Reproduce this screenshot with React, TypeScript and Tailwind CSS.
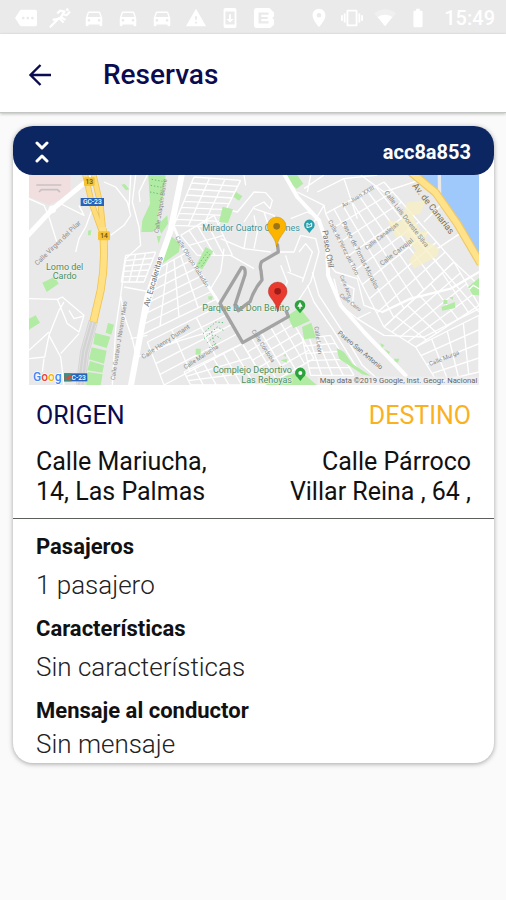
import React from "react";
import {
  MdBatteryFull,
  MdDirectionsCar,
  MdLocationOn,
  MdMore,
  MdSystemUpdate,
  MdVibration,
  MdWarning,
} from "react-icons/md";

type Point = [number, number];

const mix = (a: Point, b: Point, t: number): Point => [
  Math.round(a[0] + (b[0] - a[0]) * t),
  Math.round(a[1] + (b[1] - a[1]) * t),
];

// Street grid stretched over a four-cornered block of the city.
function streets(a: Point, b: Point, c: Point, d: Point, across: number, down: number) {
  const parts: string[] = [];
  for (let i = 0; i <= across; i++) {
    parts.push(`M${mix(a, b, i / across)}L${mix(d, c, i / across)}`);
  }
  for (let i = 0; i <= down; i++) {
    parts.push(`M${mix(a, d, i / down)}L${mix(b, c, i / down)}`);
  }
  return parts.join("");
}

interface StreetLabelProps {
  x: number;
  y: number;
  angle: number;
  size?: number;
  color?: string;
  children: string;
}

function StreetLabel({ x, y, angle, size = 20, color = "#8a8a8a", children }: StreetLabelProps) {
  return (
    <text transform={`translate(${x} ${y}) rotate(${angle})`} fontSize={size} fill={color}>
      {children}
    </text>
  );
}

function Pin({ x, y, fill, dot }: { x: number; y: number; fill: string; dot: string }) {
  return (
    <g transform={`translate(${x} ${y})`}>
      <path
        d="M0 0C-4 -20 -10 -28 -18 -39C-25 -48 -28 -54 -28 -62A28 28 0 0 1 28 -62C28 -54 25 -48 18 -39C10 -28 4 -20 0 0Z"
        fill={fill}
        stroke={dot}
        strokeWidth="1"
      />
      <circle cy="-62" r="10" fill={dot} />
    </g>
  );
}

function PlacePin({ x, y, fill, children }: { x: number; y: number; fill: string; children: React.ReactNode }) {
  return (
    <g transform={`translate(${x} ${y})`}>
      <path d="M0 23L-9 12A16 16 0 1 1 9 12Z" fill={fill} />
      {children}
    </g>
  );
}

function RouteMap() {
  return (
    <svg viewBox="15 9 1350 630" className="block w-full" role="img" aria-label="Mapa de la ruta" fontFamily="Roboto, sans-serif">
      <rect x="15" y="9" width="1350" height="630" fill="#e9e9e9" />
      <path d="M15 9H140V70L75 98L15 75Z" fill="#f1dfe0" />

      {/* Minor streets */}
      <g fill="none" stroke="#fff" strokeWidth="4" strokeLinejoin="round">
        <path d={streets([510, 15], [650, 25], [580, 165], [450, 160], 3, 8)} />
        <path d={streets([470, 190], [570, 130], [625, 250], [520, 250], 4, 2)} />
        <path d={streets([410, 285], [490, 240], [580, 380], [350, 490], 4, 6)} />
        <path d={streets([305, 250], [395, 240], [360, 330], [292, 330], 3, 5)} />
        <path d={streets([370, 510], [590, 400], [655, 515], [420, 639], 3, 4)} />
        <path d={streets([655, 515], [795, 430], [870, 560], [730, 639], 5, 5)} />
        <path d={streets([480, 600], [655, 515], [730, 639], [500, 639], 6, 3)} />
        <path d={streets([835, 500], [920, 490], [990, 610], [860, 610], 4, 5)} />
        <path d={streets([905, 125], [1080, 30], [1290, 270], [1080, 465], 7, 8)} />
        <path d={streets([1080, 465], [1290, 270], [1365, 400], [1175, 525], 6, 4)} />
        <path d={streets([1175, 525], [1365, 430], [1365, 600], [1240, 630], 4, 4)} />
        <path d="M15 80L60 100L75 135L100 215M100 90L180 130L165 100M205 110L185 165L165 200L155 240M240 30L275 45L310 90L320 130L300 160L260 190M320 9L315 110M335 9L325 90L345 165L350 220L305 260L290 370M370 9L345 60L348 90" />
        <path d="M15 380L100 382L115 375L180 430L165 480L130 455L100 382M120 390L105 415L75 490L110 555L120 639M75 480L15 535M75 490L62 555L15 560M165 485L110 545M60 560L55 600M180 432L150 440L135 415" />
        <path d="M290 370L300 430L325 500L340 570M290 370L275 470L265 639M300 345L380 360M320 500L370 490M330 560L400 530L470 505L590 470" />
        <path d="M600 110L640 120L690 60L725 62L745 85L738 110L720 90L690 105L660 150M640 160L670 170L660 230M665 40L660 9M690 130L700 180L690 230M690 110L750 130L760 180M720 120L740 180M590 200L660 230L740 240M600 230L590 300L560 350M620 250L690 290" />
        <path d="M765 240L810 240L830 190L875 200L885 240L860 330L820 390M825 240L845 215L865 240L835 330M790 300L840 320M770 280L790 330L760 390M785 250L800 300M800 140L850 120L870 130M820 60L900 100L870 150M840 50L900 9M880 60L960 20L1060 9M900 100L905 125M860 9L850 60M960 20L1000 140M1010 9L1080 60L1200 20" />
        <path d="M865 300L885 370L950 470L1015 580L1060 620M850 340L870 390L925 470L1000 590M905 265L935 300L1000 320L1020 400L1075 420M930 320L950 400L1000 440L1040 420M950 330L990 350L985 400M1000 440L1080 490L1200 495L1365 410" />
        <path d="M1150 170L1365 420M1290 270L1365 340M1200 150L1280 70M1240 230L1330 170" />
      </g>

      {/* Shopping blocks */}
      <path
        d="M1150 90L1205 85L1190 125L1165 130L1190 180L1210 175L1205 205L1245 230L1240 252L1170 290L1155 265L1175 235L1140 190L1115 195L1090 145L1130 150Z"
        fill="#f6efc6"
        opacity=".8"
      />

      {/* Parks */}
      <g fill="#b2eba3">
        <path d="M373 9H425L418 70L402 125L405 165L385 180L352 180L355 145L378 95Z" />
        <path d="M400 160L430 130L432 155L412 185Z" />
        <path d="M437 188L468 215L465 240L415 275Z" />
        <path d="M545 225L568 238L535 292L514 285Z" />
        <path d="M596 104L627 112L612 153L585 150Z" />
        <path d="M636 60L655 73L645 86L628 74Z" />
        <path d="M55 332L92 314L104 335L68 360Z" />
        <path d="M15 440L35 430L48 452L15 473Z" />
        <path d="M252 453L270 458L262 488L245 482Z" />
        <path d="M213 483L259 494L248 528L208 516Z" />
        <path d="M203 526L248 536L240 575L195 562Z" />
        <path d="M198 567L240 580L235 602L190 595Z" />
        <path d="M192 600L236 607L230 639H186Z" />
        <path d="M292 38L302 36L316 52L306 55Z" />
        <path d="M192 176L202 174L200 190L192 190Z" />
        <path d="M398 192L411 192L404 216Z" />
        <path d="M553 373L566 373L563 384L553 382Z" />
        <path d="M515 530L530 530L530 548L515 548Z" />
        <path d="M788 9H820L838 35L818 50L800 35Z" />
        <path d="M790 432L826 407L858 446L808 469Z" />
        <path d="M834 465L862 452L876 498L840 502Z" />
        <path d="M725 639L740 628L830 598L878 639Z" />
        <path d="M938 528L960 540L985 575L1040 612L1015 607L945 560Z" />
        <path d="M1252 405L1293 390L1294 408L1255 416Z" />
        <path d="M1258 384L1270 384L1270 396L1258 396ZM1276 376L1288 374L1286 384Z" />
        <path d="M1332 345L1365 318V370L1345 368Z" />
        <path d="M1068 513L1082 520L1074 527ZM1080 530L1098 540L1094 546ZM1110 560L1126 560L1122 572L1112 568Z" />
        <path d="M778 550L786 545L785 555ZM770 565L790 560L788 572Z" />
      </g>
      <path d="M1336 352L1348 340L1365 350" stroke="#fff" strokeWidth="4" fill="none" />
      <g stroke="#63bd7b" strokeWidth="3" strokeDasharray="4 6" fill="none">
        <path d="M383 22L415 28M380 40L412 46M378 60L408 66M525 275L553 237M533 283L560 243" />
        <path d="M537 485L575 450L598 452M540 500L580 465L598 475M550 512L575 490L590 500M556 527L580 512M562 478L572 520" />
      </g>

      {/* Coast */}
      <path d="M1170 9H1365V275L1320 190L1290 130L1230 55Z" fill="#9ec9fa" />
      <path d="M1246 9L1247 75" stroke="#e9e9e9" strokeWidth="10" />

      {/* Main avenues */}
      <g fill="none" stroke="#fff" strokeLinecap="round" strokeLinejoin="round">
        <path d="M10 192L85 112L215 5" strokeWidth="15" />
        <circle cx="85" cy="112" r="8" strokeWidth="7" />
        <path d="M475 0L440 175L370 375L320 645" strokeWidth="18" />
        <path d="M450 165L475 225L590 400" strokeWidth="8" />
        <path d="M780 5L820 75L885 145L910 220L912 310L950 400L1020 480L1145 610" strokeWidth="12" />
        <path d="M1075 420L1160 380L1280 350L1365 300" strokeWidth="7" />
      </g>

      {/* Motorways */}
      <g fill="none" strokeLinejoin="round">
        <path d="M208 448L182 540L170 640" stroke="#d3d3d3" strokeWidth="28" />
        <path d="M208 448L182 540L170 640M218 452L192 542L180 640M198 446L172 538L160 640" stroke="#e9e9e9" strokeWidth="2" />
        <path d="M183 5L205 100L232 175M208 5L230 100L238 180" stroke="#eec454" strokeWidth="18" />
        <path d="M236 170C244 240 240 300 230 355L208 450" stroke="#eec454" strokeWidth="24" />
        <path d="M183 5L205 100L232 175M208 5L230 100L238 180" stroke="#ffdc7b" strokeWidth="13" />
        <path d="M236 165C244 240 240 300 230 355L208 449" stroke="#ffe082" strokeWidth="19" />
        <path d="M1160 0L1235 62L1300 155L1370 275" stroke="#eec96a" strokeWidth="25" />
        <path d="M1160 0L1235 62L1300 155L1370 275" stroke="#ffe28a" strokeWidth="18" />
      </g>

      {/* Road shields */}
      <g fontSize="20" fontWeight="500" textAnchor="middle">
        <rect x="180" y="16" width="32" height="26" rx="4" fill="#f4c234" />
        <text x="196" y="36" fill="#6b5313">13</text>
        <rect x="222" y="178" width="36" height="27" rx="4" fill="#f4c234" />
        <text x="240" y="199" fill="#6b5313">14</text>
        <rect x="170" y="78" width="70" height="24" fill="#2764b8" />
        <text x="205" y="97" fill="#fff">GC-23</text>
        <rect x="120" y="604" width="70" height="24" fill="#2764b8" />
        <rect x="120" y="604" width="22" height="24" fill="#3a8f86" />
        <text x="164" y="623" fill="#fff">C-23</text>
      </g>

      <path d="M37 39H112M45 60L52 53H100L108 60" stroke="#c9c1c2" strokeWidth="5" fill="none" />

      {/* Street names */}
      <StreetLabel x={40} y={281} angle={-44}>Calle Virgen del Pilar</StreetLabel>
      <StreetLabel x={403} y={184} angle={-81} size={18}>Calle Joaquín Blume</StreetLabel>
      <StreetLabel x={374} y={405} angle={-74} size={24} color="#707070">Av. Escaleritas</StreetLabel>
      <StreetLabel x={453} y={197} angle={58} size={18}>Calle Obispo Rabadán</StreetLabel>
      <StreetLabel x={272} y={625} angle={-81} size={18}>Calle Gustavo J Navarro Nieto</StreetLabel>
      <StreetLabel x={358} y={562} angle={-34}>Calle Henry Dunant</StreetLabel>
      <StreetLabel x={484} y={592} angle={-33} size={18}>Calle Mariucha</StreetLabel>
      <StreetLabel x={682} y={478} angle={57} size={18}>Calle Córdoba</StreetLabel>
      <StreetLabel x={958} y={107} angle={-31} size={18}>Av. Juan XXIII</StreetLabel>
      <StreetLabel x={1080} y={62} angle={53}>Calle Luis Doreste Silva</StreetLabel>
      <StreetLabel x={952} y={152} angle={63}>Paseo de Tomás Morales</StreetLabel>
      <StreetLabel x={912} y={148} angle={63} size={18}>Calle de Pérez del Toro</StreetLabel>
      <StreetLabel x={1028} y={235} angle={-38} size={18}>Calle Canalejas</StreetLabel>
      <StreetLabel x={1074} y={282} angle={-38} size={20}>Calle Carvajal</StreetLabel>
      <StreetLabel x={895} y={176} angle={81} size={24} color="#707070">Paseo Chil</StreetLabel>
      <StreetLabel x={947} y={312} angle={68} size={16}>Calle Arco</StreetLabel>
      <StreetLabel x={946} y={372} angle={38} size={16}>Calle Cairo</StreetLabel>
      <StreetLabel x={940} y={485} angle={40} color="#707070">Paseo San Antonio</StreetLabel>
      <StreetLabel x={871} y={464} angle={82} size={18}>Calle León</StreetLabel>
      <StreetLabel x={1218} y={582} angle={-22} size={18}>Calle Murga</StreetLabel>
      <StreetLabel x={1164} y={42} angle={52} size={27} color="#866f3d">Av. de Canarias</StreetLabel>

      {/* Places */}
      <g fontSize="27" fill="#4c9159" stroke="#f0f0f0" strokeWidth="4" paintOrder="stroke">
        <text x="122" y="294" textAnchor="middle">Lomo del</text>
        <text x="122" y="321" textAnchor="middle">Cardo</text>
        <text x="535" y="176" fill="#3b959c">Mirador Cuatro Cañones</text>
        <text x="535" y="416">Parque De Don Benito</text>
        <text x="804" y="604" textAnchor="end">Complejo Deportivo</text>
        <text x="804" y="632" textAnchor="end">Las Rehoyas</text>
      </g>

      {/* Route */}
      <path
        d="M760 215L763 240L713 269Q706 280 711 296L714 324Q690 352 678 389Q660 402 643 416L633 399L663 308Q666 286 653 286L588 394L656 512L793 434L786 415"
        fill="none"
        stroke="#9a9a9a"
        strokeOpacity=".9"
        strokeWidth="10"
        strokeLinejoin="round"
      />

      <PlacePin x={856} y={160} fill="#27a0ae">
        <path d="M-7 -7V7L7 3V-7L0 -2Z" fill="none" stroke="#fff" strokeWidth="3" />
      </PlacePin>
      <PlacePin x={828} y={401} fill="#2ba23c">
        <path d="M0 -11L8 3H-8ZM-2 3H2V9H-2Z" fill="#fff" />
      </PlacePin>
      <PlacePin x={829} y={604} fill="#2ba23c">
        <circle r="6" cy="-1" fill="#fff" />
      </PlacePin>
      <Pin x={758} y={225} fill="#fbb500" dot="#9a7417" />
      <Pin x={761} y={420} fill="#e93a2f" dot="#9c1c18" />

      <rect x="880" y="613" width="485" height="26" fill="#f0f0f0" opacity=".7" />
      <text x="1360" y="633" fontSize="23" textAnchor="end" fill="#666">
        Map data ©2019 Google, Inst. Geogr. Nacional
      </text>
      <text x="27" y="627" fontSize="36" fontWeight="500" stroke="#fff" strokeWidth="4" paintOrder="stroke">
        <tspan fill="#4285f4">G</tspan>
        <tspan fill="#ea4335">o</tspan>
        <tspan fill="#f5b400">o</tspan>
        <tspan fill="#4285f4">g</tspan>
      </text>
      <path d="M124 610V625M130 621A5 5 0 1 1 142 615L131 619Q136 626 143 621" fill="none" stroke="#ea4335" strokeWidth="4" />
    </svg>
  );
}

function RunnerIcon() {
  return (
    <svg viewBox="0 0 24 24" className="size-[22px]" fill="none" stroke="currentColor" strokeWidth="2.4">
      <path d="M1 22L8 15L11 12L16 17M4 14L10 13M9 7L12 4L17 5L13 11L18 14M14 7L19 9L23 5" strokeLinejoin="round" />
      <circle cx="20" cy="3" r="1.6" fill="currentColor" stroke="none" />
    </svg>
  );
}

function BadgeIcon() {
  return (
    <svg viewBox="0 0 24 24" className="size-[22px]" fill="currentColor">
      <path
        fillRule="evenodd"
        d="M4 1H18L23 6V10L21 12L23 14V19L19 23H4Q1 23 1 20V4Q1 1 4 1ZM6 6V18H17V15.500H9V13.200H16V10.800H9V8.500H17V6Z"
      />
    </svg>
  );
}

function WifiIcon() {
  return (
    <svg viewBox="0 0 24 24" className="size-[22px]" fill="currentColor">
      <path d="M0 7Q12 -2 24 7L12 21Z" opacity=".3" />
      <path d="M4 11Q12 6 20 11L12 21Z" />
    </svg>
  );
}

function StatusBar() {
  return (
    <div className="flex h-[34px] items-center justify-between bg-[#eaeaea] pt-px pr-[11px] pl-[15px] text-white">
      <div className="flex items-center gap-3 text-[22px]">
        <MdMore />
        <RunnerIcon />
        <MdDirectionsCar />
        <MdDirectionsCar />
        <MdDirectionsCar />
        <MdWarning />
        <MdSystemUpdate />
        <BadgeIcon />
      </div>
      <div className="flex items-center gap-[11px] text-[22px]">
        <MdLocationOn />
        <MdVibration />
        <WifiIcon />
        <MdBatteryFull />
        <span className="pl-1 text-[20px] leading-6 font-medium">15:49</span>
      </div>
    </div>
  );
}

interface DetailProps {
  title: string;
  value: string;
  compact?: boolean;
}

function Detail({ title, value, compact = false }: DetailProps) {
  return (
    <div className={compact ? "flex flex-col gap-[3px]" : "flex flex-col gap-2"}>
      <dt className="text-[22px] leading-[26px] font-bold">{title}</dt>
      <dd className="text-[26px] leading-[34px] font-light text-[#222]">{value}</dd>
    </div>
  );
}

export default function App() {
  return (
    <div className="min-h-screen bg-[#fafafa] font-['Roboto',sans-serif] text-[#111]">
      <StatusBar />
      <header className="flex h-[79px] items-center gap-12 border-b border-[#c4c6c4] bg-white px-[25px] pt-[3px] text-[#0b0b50] shadow-[0_1px_3px_rgba(0,0,0,0.25)]">
        <button type="button" aria-label="Volver" className="flex size-[30px] items-center justify-center">
          <svg viewBox="0 0 24 24" className="size-6 shrink-0" fill="none" stroke="currentColor" strokeWidth="2.400">
            <path d="M23 12H3M12.500 2L2.500 12L12.500 22" />
          </svg>
        </button>
        <h1 className="text-[28px] leading-8 font-medium">Reservas</h1>
      </header>

      <main className="pt-[13px] pr-3 pl-[13px]">
        <article className="rounded-[20px] bg-white pb-0.5 shadow-[0_1px_5px_rgba(0,0,0,0.35)]">
          <div className="flex h-[49px] items-center justify-between rounded-[20px] bg-[#0c2661] px-[23px] pt-0.5 text-white">
            <button type="button" aria-label="Contraer" className="flex w-[11px] justify-center">
              <svg viewBox="0 0 14 24" className="h-6 w-[14px] shrink-0" fill="none" stroke="currentColor" strokeWidth="3" strokeLinecap="round" strokeLinejoin="round">
                <path d="M2 3L7 8L12 3M2 21L7 16L12 21" />
              </svg>
            </button>
            <h2 className="text-[20px] leading-7 font-bold">acc8a853</h2>
          </div>

          <div className="mr-[15px] ml-4">
            <RouteMap />
          </div>

          <div className="flex justify-between gap-4 px-[23px] pt-4 pb-[11px] text-[25px] leading-[30px]">
            <section className="flex max-w-[190px] flex-col gap-4">
              <h3 className="text-[#0b0b50]">ORIGEN</h3>
              <p>Calle Mariucha, 14, Las Palmas</p>
            </section>
            <section className="flex max-w-[190px] flex-col gap-4 text-right">
              <h3 className="text-[#fbb01e]">DESTINO</h3>
              <p>Calle Párroco Villar Reina , 64 ,</p>
            </section>
          </div>

          <dl className="flex flex-col gap-[14px] border-t border-[#5c5f5c] px-[23px] pt-[15px]">
            <Detail title="Pasajeros" value="1 pasajero" />
            <Detail title="Características" value="Sin características" />
            <Detail title="Mensaje al conductor" value="Sin mensaje" compact />
          </dl>
        </article>
      </main>
    </div>
  );
}
